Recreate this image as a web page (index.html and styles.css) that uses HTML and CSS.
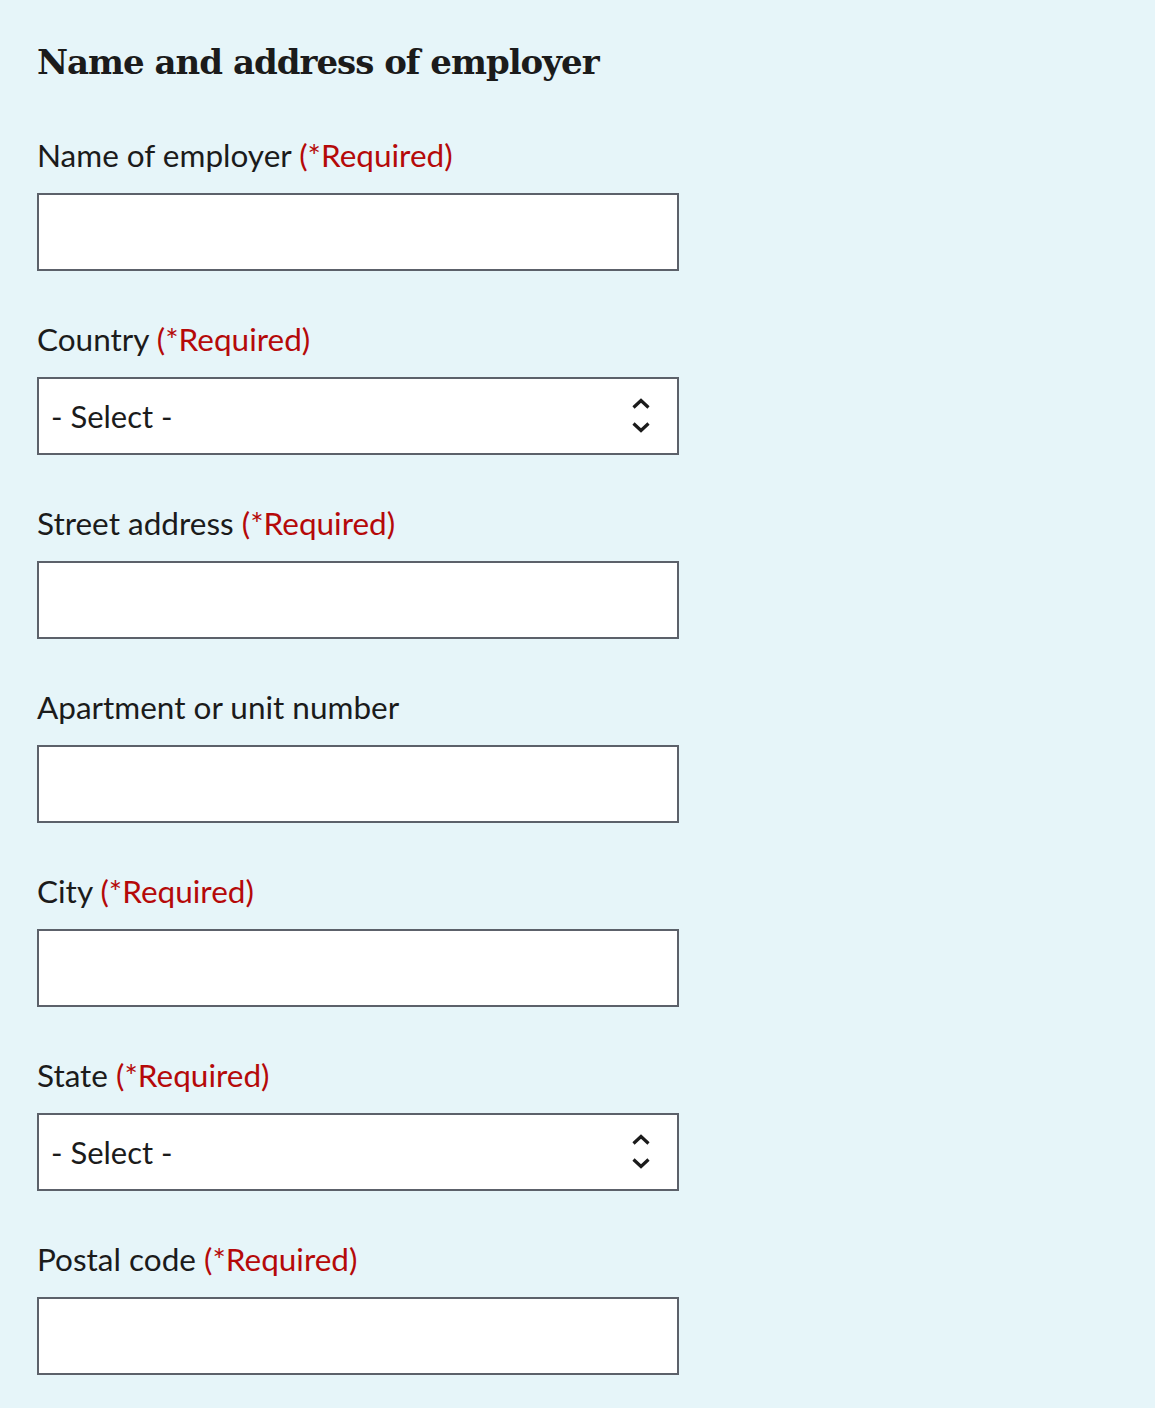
FILE: index.html
```html
<!DOCTYPE html>
<html lang="en">
<head>
<meta charset="utf-8">
<title>Name and address of employer</title>
<link rel="stylesheet" href="styles.css">
</head>
<body>
<main class="page">
  <h2 class="heading">Name and address of employer</h2>

  <div class="field">
    <label class="label" for="employer">Name of employer <span class="req">(*Required)</span></label>
    <input class="input" id="employer" type="text">
  </div>

  <div class="field">
    <label class="label" for="country">Country <span class="req">(*Required)</span></label>
    <div class="select-wrap">
      <select class="input select" id="country"><option>- Select -</option></select>
      <svg class="chev" width="20" height="38" viewBox="0 0 20 38" aria-hidden="true"><path d="M2.5 10.5 L10 3.5 L17.5 10.5 M2.5 26.5 L10 33.5 L17.5 26.5" fill="none" stroke="#1b1b1b" stroke-width="3.2"/></svg>
    </div>
  </div>

  <div class="field">
    <label class="label" for="street">Street address <span class="req">(*Required)</span></label>
    <input class="input" id="street" type="text">
  </div>

  <div class="field">
    <label class="label" for="apt">Apartment or unit number</label>
    <input class="input" id="apt" type="text">
  </div>

  <div class="field">
    <label class="label" for="city">City <span class="req">(*Required)</span></label>
    <input class="input" id="city" type="text">
  </div>

  <div class="field">
    <label class="label" for="state">State <span class="req">(*Required)</span></label>
    <div class="select-wrap">
      <select class="input select" id="state"><option>- Select -</option></select>
      <svg class="chev" width="20" height="38" viewBox="0 0 20 38" aria-hidden="true"><path d="M2.5 10.5 L10 3.5 L17.5 10.5 M2.5 26.5 L10 33.5 L17.5 26.5" fill="none" stroke="#1b1b1b" stroke-width="3.2"/></svg>
    </div>
  </div>

  <div class="field">
    <label class="label" for="postal">Postal code <span class="req">(*Required)</span></label>
    <input class="input" id="postal" type="text">
  </div>
</main>
</body>
</html>
```

FILE: styles.css
```css
html, body {
  margin: 0;
  padding: 0;
  background: #e6f5f9;
}
.page {
  display: flex;
  flex-direction: column;
  padding: 37px 0 40px 37px;
  min-height: 1408px;
  box-sizing: border-box;
}
.heading {
  margin: 0;
  font-family: "DejaVu Serif", serif;
  font-weight: bold;
  font-size: 34px;
  line-height: 50px;
  letter-spacing: -1px;
  color: #1b1b1b;
}
.field {
  display: flex;
  flex-direction: column;
  margin-top: 48px;
  width: 642px;
}
.label {
  font-family: "Lato", sans-serif;
  font-size: 31.5px;
  line-height: 40px;
  color: #1b1b1b;
  margin-bottom: 18px;
}
.req {
  color: #b50909;
}
.input {
  box-sizing: border-box;
  width: 642px;
  height: 78px;
  margin: 0;
  border: 2px solid #5c616a;
  border-radius: 0;
  background: #ffffff;
  font-family: "Lato", sans-serif;
  font-size: 31px;
  color: #1b1b1b;
  padding: 0 12px;
  outline: none;
}
.select-wrap {
  position: relative;
  width: 642px;
}
.select {
  -webkit-appearance: none;
  appearance: none;
  display: block;
  padding-left: 12px;
}
.chev {
  position: absolute;
  right: 28px;
  top: 20px;
  pointer-events: none;
}
```
